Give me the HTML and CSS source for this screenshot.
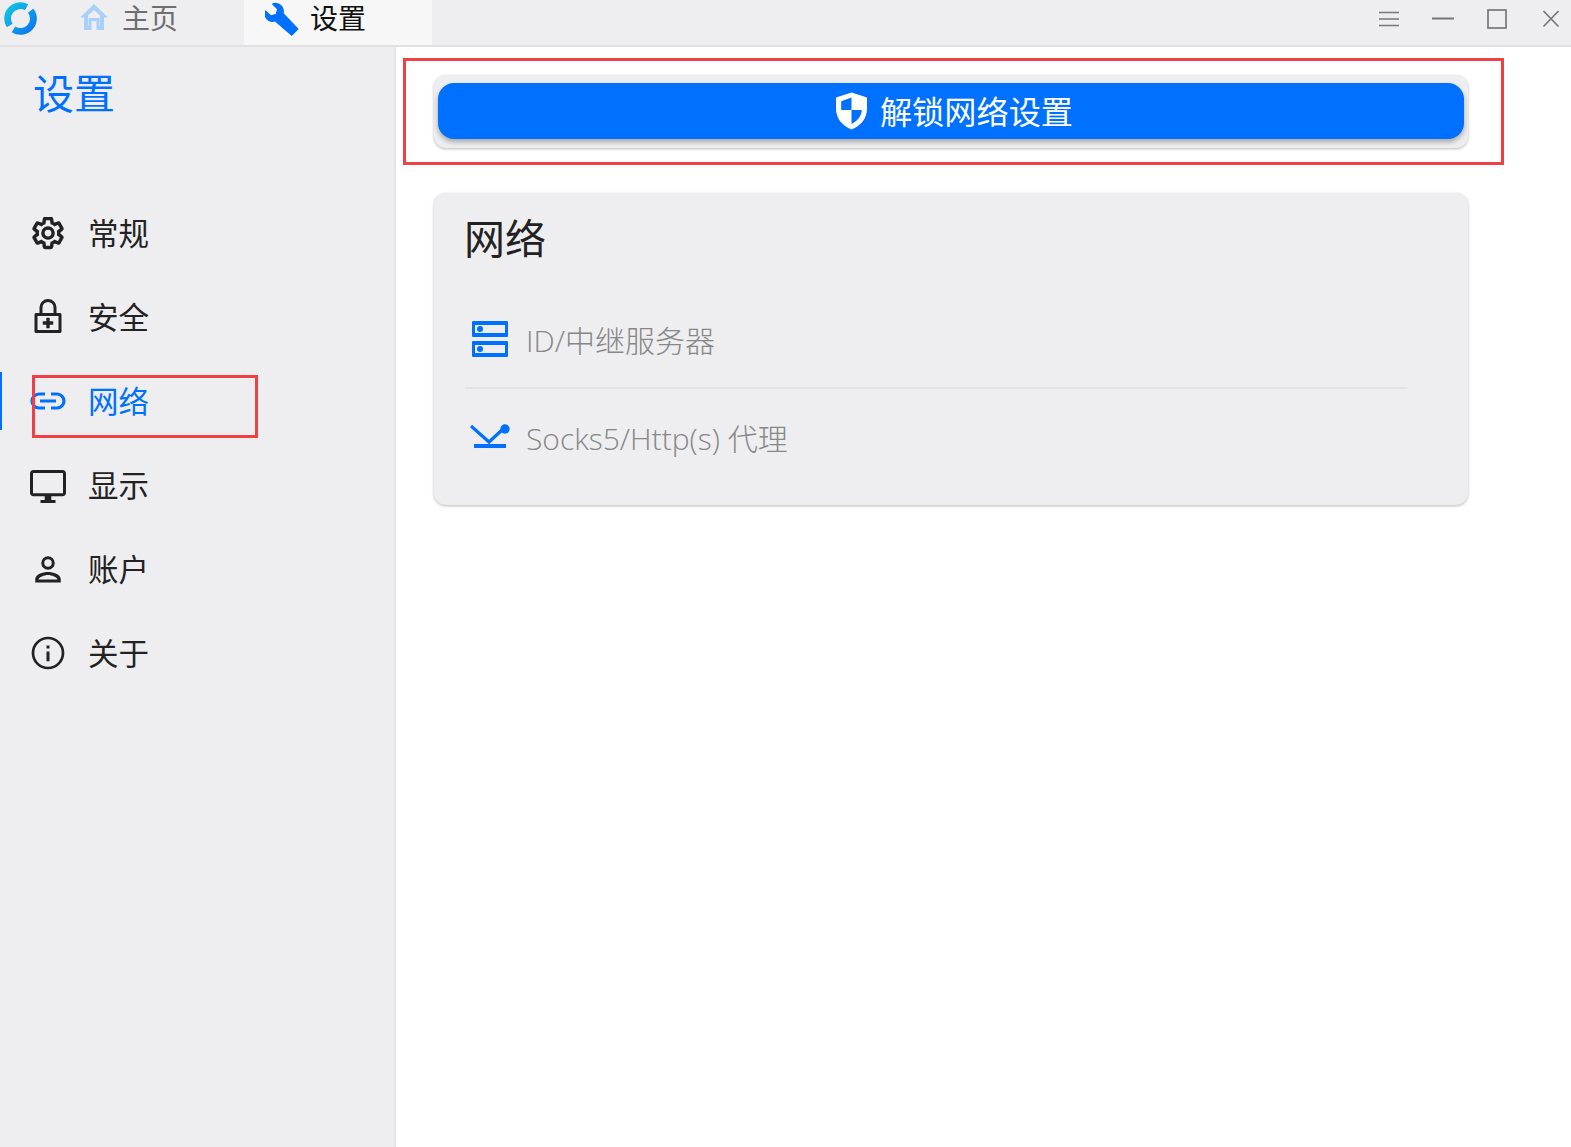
FILE: index.html
```html
<!DOCTYPE html>
<html lang="zh-CN">
<head>
<meta charset="utf-8">
<title>设置</title>
<link rel="stylesheet" href="styles.css">
</head>
<body>
<div class="app">
  <header class="titlebar">
    <svg class="logo" viewBox="0 0 32 32"><defs><linearGradient id="lg" x1="0" y1="0" x2="1" y2="1"><stop offset="0" stop-color="#12c4e4"/><stop offset="1" stop-color="#0a78f0"/></linearGradient></defs><path d="M5.500 22.800A12.500 12.500 0 0 1 21.900 5M25.850 8.300A12.500 12.500 0 0 1 9.200 26.500" fill="none" stroke="url(#lg)" stroke-width="6.600"/></svg>
    <div class="tab tab-home">
      <svg class="tab-icon home" viewBox="0 0 30 28"><path d="M15 1 1 14.500h4V27h7.500v-9h5v9H25V14.500h4zM9 23V12.500L15 7l6 5.500V23h-.5v-8h-11v8z" fill="#a9d0f9" fill-rule="evenodd"/></svg>
      <span>主页</span>
    </div>
    <div class="tab tab-active">
      <svg class="tab-icon wrench" viewBox="0 0 34 34"><path d="M13.500 1.500c-2.200-1-4.800-.8-6.800.4l5.300 5.300-1.300 4.800-4.800 1.300L.6 8.300c-1.200 2-1.400 4.600-.4 6.900 1.700 3.700 5.900 5.500 9.700 4.400L26.700 34l7-7-15-15.800c1-3.800-1.300-8.400-5.200-9.700z" fill="#0071ff"/></svg>
      <span>设置</span>
    </div>
    <div class="window-controls">
      <svg class="win" viewBox="0 0 54 20"><path d="M17 3.500h20M17 10h20M17 16.500h20" stroke="#777" stroke-width="1.300" fill="none"/></svg>
      <svg class="win" viewBox="0 0 54 20"><path d="M16 9.500h22" stroke="#777" stroke-width="2" fill="none"/></svg>
      <svg class="win" viewBox="0 0 54 20"><rect x="18" y="1" width="18" height="18" stroke="#777" stroke-width="1.700" fill="none"/></svg>
      <svg class="win" viewBox="0 0 54 20"><path d="M19.500 2l15 15.500M34.500 2l-15 15.500" stroke="#777" stroke-width="1.700" fill="none"/></svg>
    </div>
  </header>
  <div class="content">
    <aside class="sidebar">
      <h1 class="side-title">设置</h1>
      <nav class="menu">
        <div class="menu-item">
          <svg class="menu-icon" viewBox="0 0 24 24"><path d="M19.140 12.940c.040-.300.060-.610.060-.940s-.020-.640-.070-.940l2.030-1.580a.5.500 0 0 0 .120-.610l-1.920-3.320a.49.49 0 0 0-.590-.220l-2.390.960a7 7 0 0 0-1.620-.940l-.360-2.540a.48.480 0 0 0-.480-.410h-3.840a.47.470 0 0 0-.470.410l-.360 2.540c-.590.240-1.130.570-1.620.940l-2.390-.960a.48.480 0 0 0-.590.220L2.740 8.870a.47.470 0 0 0 .120.610l2.030 1.580c-.050.300-.090.630-.090.940s.020.640.07.940l-2.030 1.580a.5.500 0 0 0-.120.610l1.920 3.320c.120.220.370.290.590.220l2.390-.960c.500.380 1.030.700 1.620.940l.360 2.540c.050.240.240.410.480.410h3.840c.240 0 .440-.170.470-.410l.360-2.540c.590-.240 1.130-.560 1.620-.940l2.390.960c.220.080.470 0 .590-.220l1.920-3.320a.47.470 0 0 0-.120-.610zM12 15.400a3.400 3.400 0 1 1 0-6.800 3.400 3.400 0 0 1 0 6.800z" fill="none" stroke="#222" stroke-width="2.300"/></svg>
          <span>常规</span>
        </div>
        <div class="menu-item">
          <svg class="menu-icon" viewBox="0 0 36 36"><path d="M26.500 14V8.500a8.500 8.500 0 0 0-17 0V14H6A1.500 1.500 0 0 0 4.500 15.500v17A1.500 1.500 0 0 0 6 34h24a1.500 1.500 0 0 0 1.500-1.500v-17A1.500 1.500 0 0 0 30 14zM12.500 8.500a5.500 5.500 0 0 1 11 0V14h-11zM28.500 31h-21V17h21zM16.300 18.800h3.400v3.500h3.500v3.400h-3.500v3.500h-3.400v-3.500h-3.500v-3.400h3.500z" fill="#222"/></svg>
          <span>安全</span>
        </div>
        <div class="menu-item menu-active">
          <svg class="menu-icon" viewBox="0 0 36 36"><path d="M15 11H9a7 7 0 0 0 0 14h6M21 11h6a7 7 0 0 1 0 14h-6M10 18h16" fill="none" stroke="#0071ff" stroke-width="3.200"/></svg>
          <span>网络</span>
        </div>
        <div class="menu-item">
          <svg class="menu-icon" viewBox="0 0 24 24"><path d="M21.800 2H2.200C1 2 0 3 0 4.200v13.100c0 1.200 1 2.200 2.200 2.200h7.600V22H7v2h10v-2h-2.800v-2.500h7.600c1.200 0 2.200-1 2.200-2.200V4.200C24 3 23 2 21.800 2zm.2 15.500H2V4h20z" fill="#222"/></svg>
          <span>显示</span>
        </div>
        <div class="menu-item">
          <svg class="menu-icon" viewBox="0 0 24 24"><path d="M12 3.500a4.500 4.500 0 1 0 0 9 4.500 4.500 0 0 0 0-9zm0 2a2.500 2.500 0 1 1 0 5 2.500 2.500 0 0 1 0-5zM12 14c-3.500 0-8.500 1.600-8.500 4.700V21h17v-2.300C20.500 15.600 15.500 14 12 14zm-6.400 5c.4-1.500 4-3 6.400-3s6 1.500 6.400 3z" fill="#222"/></svg>
          <span>账户</span>
        </div>
        <div class="menu-item">
          <svg class="menu-icon" viewBox="0 0 24 24"><path d="M12 1.100a10.900 10.900 0 1 0 0 21.800 10.900 10.900 0 0 0 0-21.800zm0 1.800a9.100 9.100 0 1 1 0 18.200 9.100 9.100 0 0 1 0-18.200zM11 7h2v2h-2zm0 4h2v6.500h-2z" fill="#222"/></svg>
          <span>关于</span>
        </div>
      </nav>
      <div class="mark mark-side"></div>
    </aside>
    <main class="main">
      <div class="mark mark-main"></div>
      <section class="card card-unlock">
        <button class="unlock" type="button">
          <svg class="shield" viewBox="0 0 32 36"><path d="M16 0 1 5v11c0 9.500 6.500 16.500 15 20 8.500-3.500 15-10.500 15-20V5z" fill="#fff"/><path d="M16 5 6 8.500V17h10zM16 17v13.500c5.500-2.700 9.700-7.500 10-13.500z" fill="#0071ff"/></svg>
          <span>解锁网络设置</span>
        </button>
      </section>
      <section class="card card-network">
        <h2 class="card-title">网络</h2>
        <div class="row">
          <svg class="row-icon" viewBox="0 0 36 36"><path d="M1 0h34a1 1 0 0 1 1 1v14a1 1 0 0 1-1 1H1a1 1 0 0 1-1-1V1a1 1 0 0 1 1-1zm2 4v8h30V4zM1 20h34a1 1 0 0 1 1 1v14a1 1 0 0 1-1 1H1a1 1 0 0 1-1-1V21a1 1 0 0 1 1-1zm2 4v8h30v-8z" fill="#0071ff" fill-rule="evenodd"/><circle cx="8" cy="8" r="3" fill="#0071ff"/><circle cx="8" cy="28" r="3" fill="#0071ff"/></svg>
          <span>ID/中继服务器</span>
        </div>
        <div class="row row-last">
          <svg class="proxy-icon" viewBox="0 0 40 26"><path d="M1 2l18 16L32 6" stroke="#0071ff" stroke-width="3.200" fill="none"/><rect x="4" y="20" width="32" height="4" fill="#0071ff"/><circle cx="35" cy="5" r="4.700" fill="#0071ff"/></svg>
          <span>Socks5/Http(s) 代理</span>
        </div>
      </section>
    </main>
  </div>
</div>
</body>
</html>
```
FILE: styles.css
```css
* { box-sizing: border-box; }
html, body { margin: 0; height: 100%; }
body { font-family: "Open Sans", "Noto Sans CJK SC", sans-serif; background: #fff; overflow: hidden; }
.app { display: flex; flex-direction: column; height: 100vh; }

.titlebar { display: flex; align-items: stretch; height: 47px; flex: none; background: #eeeef0; border-bottom: 2px solid #e1e1e3; position: relative; }
.logo { width: 33px; height: 33px; margin: 2px 0 0 4px; flex: none; }
.tab { width: 188px; display: flex; align-items: center; font-size: 28px; line-height: 38px; color: #6e6e6e; padding-bottom: 10px; }
.tab-home { width: 207px; padding-left: 42px; gap: 13px; }
.tab-active { background: #f7f7f8; color: #111; padding-left: 21px; gap: 11px; }
.tab-icon { flex: none; }
.home { width: 30px; height: 28px; margin-bottom: 2px; }
.wrench { width: 34px; height: 34px; margin-top: 2px; }
.window-controls { margin-left: auto; margin-right: -7px; display: flex; align-items: center; padding-bottom: 8px; }
.win { width: 54px; height: 20px; flex: none; }

.content { flex: 1; display: flex; min-height: 0; }
.sidebar { width: 396px; flex: none; background: #eeeef0; border-right: 2px solid #e4e4e6; position: relative; }
.side-title { margin: 0; padding: 19px 0 0 33px; font-size: 41px; line-height: 54px; font-weight: 400; color: #0071ff; }
.menu { margin-top: 83px; display: flex; flex-direction: column; gap: 24px; }
.menu-item { position: relative; display: flex; align-items: center; gap: 22px; height: 60px; padding-left: 30px; font-size: 30.500px; line-height: 40px; color: #222; }
.menu-icon { width: 36px; height: 36px; flex: none; }
.menu-active { color: #0071ff; }
.menu-active::before { content: ""; position: absolute; left: 0; top: 1px; width: 2px; height: 58px; background: #0071ff; }

.main { flex: 1; position: relative; padding: 28px 103px 0 38px; display: flex; flex-direction: column; gap: 45px; }
.card { background: #eeeef0; border-radius: 12px; box-shadow: 0 1px 3px rgba(0, 0, 0, .28); width: 1034px; }
.card-unlock { height: 73px; padding: 8px 4px 0 4px; }
.unlock { width: 100%; height: 56px; border: 0; border-radius: 16px; background: #0071ff; color: #fff; font: inherit; font-size: 32.200px; line-height: 44px; box-shadow: 0 3px 5px rgba(0, 0, 0, .3); display: flex; align-items: center; justify-content: center; gap: 12px; padding: 2px 0 0 6px; }
.shield { width: 33px; height: 38px; flex: none; margin-bottom: 2px; }
.card-network { height: 312px; padding: 18px 0 0 30px; }
.card-title { margin: 0; font-size: 41px; line-height: 54px; font-weight: 400; color: #222; }
.row { display: flex; align-items: center; gap: 18px; width: 940px; height: 98px; margin-left: 2px; padding-left: 6px; font-size: 30px; color: #878787; font-weight: 300; border-bottom: 2px solid #e2e2e4; }
.card-title + .row { margin-top: 26px; }
.row-last { border-bottom: 0; margin-top: -1px; }
.row-icon { width: 36px; height: 36px; flex: none; }
.proxy-icon { width: 40px; height: 26px; margin: 0 -2px; flex: none; }

.mark { position: absolute; border: 3px solid #ee4045; pointer-events: none; }
.mark-side { left: 32px; top: 328px; width: 226px; height: 63px; }
.mark-main { left: 7px; top: 11px; width: 1101px; height: 107px; }
```
